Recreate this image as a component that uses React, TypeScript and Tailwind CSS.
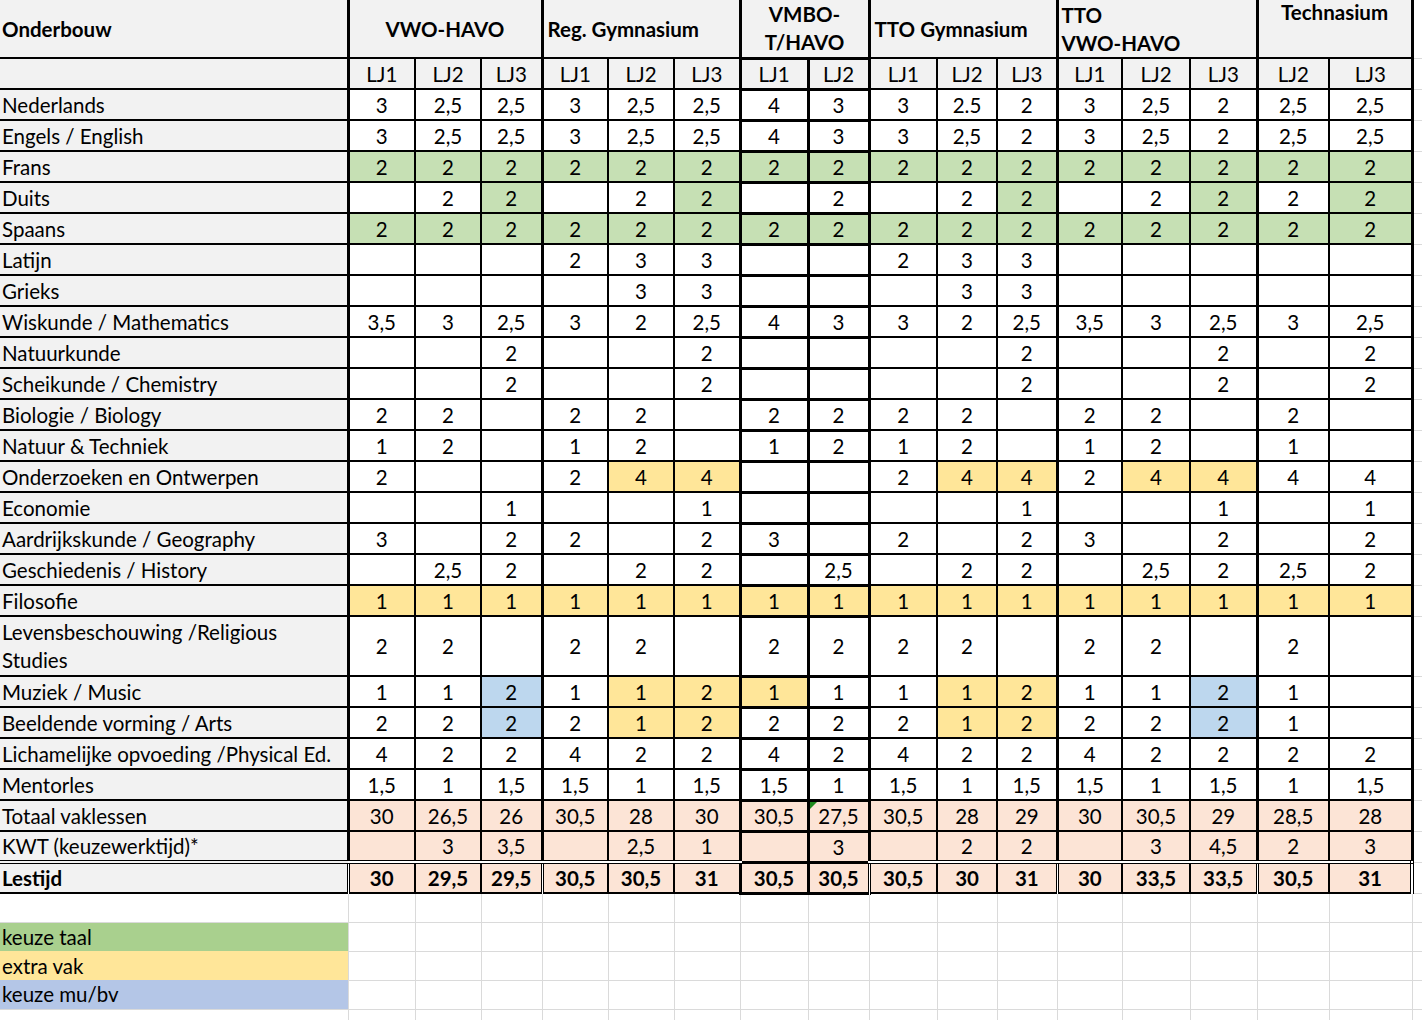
import React from "react";

// column widths as measured from the sheet (px)
const colWidths = [
  "w-[348px]", "w-[67px]", "w-[66px]", "w-[61px]", "w-[66px]", "w-[66px]", "w-[66px]",
  "w-[68px]", "w-[61px]", "w-[68px]", "w-[60px]", "w-[60px]", "w-[65px]", "w-[68px]",
  "w-[67px]", "w-[72px]", "w-[83px]", "w-[10px]",
];

const groupStarts = [0, 3, 6, 8, 11, 14];
const vmbo = [6, 7];

const years = ["LJ1", "LJ2", "LJ3", "LJ1", "LJ2", "LJ3", "LJ1", "LJ2", "LJ1", "LJ2", "LJ3", "LJ1", "LJ2", "LJ3", "LJ2", "LJ3"];

type Row = { label: React.ReactNode; cells: string[]; tall?: boolean; kind?: "total" | "bold" };

// suffix g = keuze taal, y = extra vak, b = keuze mu/bv
const rows: Row[] = [
  { label: "Nederlands", cells: ["3", "2,5", "2,5", "3", "2,5", "2,5", "4", "3", "3", "2.5", "2", "3", "2,5", "2", "2,5", "2,5"] },
  { label: "Engels / English", cells: ["3", "2,5", "2,5", "3", "2,5", "2,5", "4", "3", "3", "2,5", "2", "3", "2,5", "2", "2,5", "2,5"] },
  { label: "Frans", cells: Array(16).fill("2g") },
  { label: "Duits", cells: ["", "2", "2g", "", "2", "2g", "", "2", "", "2", "2g", "", "2", "2g", "2", "2g"] },
  { label: "Spaans", cells: Array(16).fill("2g") },
  { label: "Latijn", cells: ["", "", "", "2", "3", "3", "", "", "2", "3", "3", "", "", "", "", ""] },
  { label: "Grieks", cells: ["", "", "", "", "3", "3", "", "", "", "3", "3", "", "", "", "", ""] },
  { label: "Wiskunde / Mathematics", cells: ["3,5", "3", "2,5", "3", "2", "2,5", "4", "3", "3", "2", "2,5", "3,5", "3", "2,5", "3", "2,5"] },
  { label: "Natuurkunde", cells: ["", "", "2", "", "", "2", "", "", "", "", "2", "", "", "2", "", "2"] },
  { label: "Scheikunde / Chemistry", cells: ["", "", "2", "", "", "2", "", "", "", "", "2", "", "", "2", "", "2"] },
  { label: "Biologie / Biology", cells: ["2", "2", "", "2", "2", "", "2", "2", "2", "2", "", "2", "2", "", "2", ""] },
  { label: "Natuur & Techniek", cells: ["1", "2", "", "1", "2", "", "1", "2", "1", "2", "", "1", "2", "", "1", ""] },
  { label: "Onderzoeken en Ontwerpen", cells: ["2", "", "", "2", "4y", "4y", "", "", "2", "4y", "4y", "2", "4y", "4y", "4", "4"] },
  { label: "Economie", cells: ["", "", "1", "", "", "1", "", "", "", "", "1", "", "", "1", "", "1"] },
  { label: "Aardrijkskunde / Geography", cells: ["3", "", "2", "2", "", "2", "3", "", "2", "", "2", "3", "", "2", "", "2"] },
  { label: "Geschiedenis / History", cells: ["", "2,5", "2", "", "2", "2", "", "2,5", "", "2", "2", "", "2,5", "2", "2,5", "2"] },
  { label: "Filosofie", cells: Array(16).fill("1y") },
  {
    label: (
      <>
        Levensbeschouwing /Religious
        <br />
        Studies
      </>
    ),
    tall: true,
    cells: ["2", "2", "", "2", "2", "", "2", "2", "2", "2", "", "2", "2", "", "2", ""],
  },
  { label: "Muziek / Music", cells: ["1", "1", "2b", "1", "1y", "2y", "1y", "1", "1", "1y", "2y", "1", "1", "2b", "1", ""] },
  { label: "Beeldende vorming / Arts", cells: ["2", "2", "2b", "2", "1y", "2y", "2", "2", "2", "1y", "2y", "2", "2", "2b", "1", ""] },
  { label: "Lichamelijke opvoeding /Physical Ed.", cells: ["4", "2", "2", "4", "2", "2", "4", "2", "4", "2", "2", "4", "2", "2", "2", "2"] },
  { label: "Mentorles", cells: ["1,5", "1", "1,5", "1,5", "1", "1,5", "1,5", "1", "1,5", "1", "1,5", "1,5", "1", "1,5", "1", "1,5"] },
  { label: "Totaal vaklessen", kind: "total", cells: ["30", "26,5", "26", "30,5", "28", "30", "30,5", "27,5", "30,5", "28", "29", "30", "30,5", "29", "28,5", "28"] },
  { label: "KWT (keuzewerktijd)*", kind: "total", cells: ["", "3", "3,5", "", "2,5", "1", "", "3", "", "2", "2", "", "3", "4,5", "2", "3"] },
  { label: "Lestijd", kind: "bold", cells: ["30", "29,5", "29,5", "30,5", "30,5", "31", "30,5", "30,5", "30,5", "30", "31", "30", "33,5", "33,5", "30,5", "31"] },
];

function borderFor(i: number, lestijd = false) {
  if (vmbo.includes(i)) return "border-[3px] border-black";
  let cls = "border-2 border-black";
  if (groupStarts.includes(i)) cls += " border-l-[3px]";
  if (i === 15) cls += lestijd ? " border-r-[4px]" : " border-r-[3px]";
  if (lestijd) cls += " border-double border-t-[4px]";
  return cls;
}

function bgFor(v: string, kind?: Row["kind"]) {
  if (v.endsWith("g")) return "bg-[#c6e0b4]";
  if (v.endsWith("y")) return "bg-[#ffe699]";
  if (v.endsWith("b")) return "bg-[#bdd7ee]";
  if (kind) return "bg-[#fce4d6]";
  return "bg-white";
}

function GridRow({ children }: { children?: React.ReactNode }) {
  return (
    <tr className="h-[29px] leading-[24px]">
      {children ?? <td className="border border-[#dadada] border-l-0" />}
      {Array.from({ length: 17 }).map((_, i) => (
        <td key={i} className="border border-[#dadada]" />
      ))}
    </tr>
  );
}

export default function App() {
  return (
    <div className="w-[1422px] h-[1020px] overflow-hidden bg-white font-['Lato',sans-serif] text-[20.5px] text-black">
      <table className="table-fixed border-collapse w-[1422px]">
        <colgroup>
          {colWidths.map((w, i) => (
            <col key={i} className={w} />
          ))}
        </colgroup>
        <tbody>
          <tr className="h-[58px] font-bold leading-[28px]">
            <td className="border-2 border-black border-t-0 border-l-0 border-r-[3px] bg-[#f2f2f2] pl-[2px] align-middle">
              Onderbouw
            </td>
            <td colSpan={3} className="border-2 border-black border-t-0 border-l-[3px] bg-[#f2f2f2] text-center align-middle">
              VWO-HAVO
            </td>
            <td colSpan={3} className="border-2 border-black border-t-0 border-l-[3px] bg-[#f2f2f2] pl-[4px] align-middle whitespace-nowrap">
              Reg. Gymnasium
            </td>
            <td colSpan={2} className="border-[3px] border-black border-t-0 bg-[#f2f2f2] text-center align-middle">
              VMBO-
              <br />
              T/HAVO
            </td>
            <td colSpan={3} className="border-2 border-black border-t-0 border-l-[3px] bg-[#f2f2f2] pl-[4px] align-middle whitespace-nowrap">
              TTO Gymnasium
            </td>
            <td colSpan={3} className="border-2 border-black border-t-0 border-l-[3px] bg-[#f2f2f2] pl-[3px] align-middle">
              TTO
              <br />
              VWO-HAVO
            </td>
            <td colSpan={2} className="border-2 border-black border-t-0 border-l-[3px] border-r-[3px] bg-[#f2f2f2] text-center align-top">
              <span className="relative top-[-2px]">Technasium</span>
            </td>
            <td className="border-b border-[#dadada]" />
          </tr>

          <tr className="h-[31px] leading-[24px]">
            <td className="border-2 border-black border-l-0 border-r-[3px] bg-[#f2f2f2]" />
            {years.map((y, i) => (
              <td key={i} className={`${borderFor(i)} bg-[#f2f2f2] text-center align-middle`}>
                {y}
              </td>
            ))}
            <td className="border-b border-[#dadada]" />
          </tr>

          {rows.map((r, ri) => {
            const lestijd = r.kind === "bold";
            return (
              <tr key={ri} className={r.tall ? "h-[60px] leading-[24px]" : "h-[31px] leading-[24px]"}>
                <td
                  className={`border-2 border-black border-l-0 border-r-[3px] bg-[#f2f2f2] pl-[2px] align-middle whitespace-nowrap ${
                    r.tall ? "leading-[28px]" : ""
                  } ${lestijd ? "font-bold border-double border-t-[4px] border-r-[3px]" : ""}`}
                >
                  {r.label}
                </td>
                {r.cells.map((c, i) => {
                  const v = c.replace(/[gyb]$/, "");
                  return (
                    <td
                      key={i}
                      className={`${borderFor(i, lestijd && !vmbo.includes(i))} ${bgFor(c, r.kind)} relative text-center align-middle ${
                        lestijd ? "font-bold" : ""
                      }`}
                    >
                      {r.kind === "total" && ri === 22 && i === 7 && (
                        <span className="absolute left-0 top-0 w-0 h-0 border-t-[7px] border-r-[7px] border-t-[#1e8a1e] border-r-transparent" />
                      )}
                      {v}
                    </td>
                  );
                })}
                <td className="border-b border-[#dadada]" />
              </tr>
            );
          })}

          <GridRow />
          <GridRow>
            <td className="bg-[#a9d08e] pl-[2px] align-middle">keuze taal</td>
          </GridRow>
          <GridRow>
            <td className="bg-[#ffe699] pl-[2px] align-middle">extra vak</td>
          </GridRow>
          <GridRow>
            <td className="bg-[#b4c6e7] pl-[2px] align-middle">keuze mu/bv</td>
          </GridRow>
          <GridRow />
        </tbody>
      </table>
    </div>
  );
}
